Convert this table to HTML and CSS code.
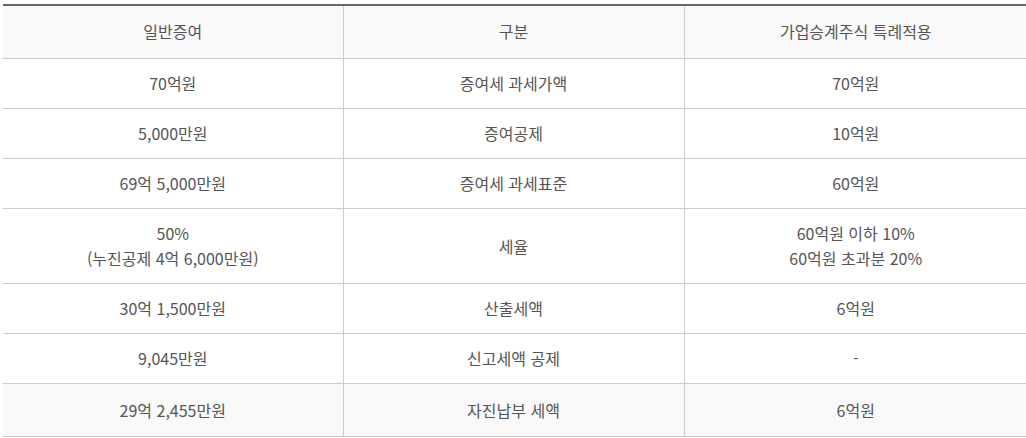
FILE: index.html
```html
<!DOCTYPE html>
<html lang="ko">
<head>
<meta charset="utf-8">
<link rel="stylesheet" href="styles.css">
</head>
<body>
<div class="wrap">
<table class="tbl">
  <colgroup><col class="c1"><col class="c2"><col class="c3"></colgroup>
  <thead>
    <tr class="head"><th>일반증여</th><th>구분</th><th>가업승계주식 특례적용</th></tr>
  </thead>
  <tbody>
    <tr><td>70억원</td><td>증여세 과세가액</td><td>70억원</td></tr>
    <tr><td>5,000만원</td><td>증여공제</td><td>10억원</td></tr>
    <tr><td>69억 5,000만원</td><td>증여세 과세표준</td><td>60억원</td></tr>
    <tr><td>50%<br>(누진공제 4억 6,000만원)</td><td>세율</td><td>60억원 이하 10%<br>60억원 초과분 20%</td></tr>
    <tr><td>30억 1,500만원</td><td>산출세액</td><td>6억원</td></tr>
    <tr><td>9,045만원</td><td>신고세액 공제</td><td>-</td></tr>
    <tr class="total"><td>29억 2,455만원</td><td>자진납부 세액</td><td>6억원</td></tr>
  </tbody>
</table>
</div>
</body>
</html>
```
FILE: styles.css
```css
html, body { margin: 0; padding: 0; background: #fff; }
.wrap { padding: 4px 0 0 3px; }
.tbl {
  width: 1024px;
  border-collapse: collapse;
  table-layout: fixed;
  border-top: 2px solid #666;
  font-family: "Noto Sans CJK KR", "Noto Sans", sans-serif;
  font-size: 16px;
  line-height: 25px;
  color: #555;
}
.c1 { width: 340px; }
.c2 { width: 341px; }
.c3 { width: 343px; }
.tbl th, .tbl td {
  border-bottom: 1px solid #ccc;
  border-left: 1px solid #ccc;
  text-align: center;
  vertical-align: middle;
  padding: 12px 4px;
  font-weight: 400;
}
.tbl th:first-child, .tbl td:first-child { border-left: none; }
.head th { background: #f9f9f9; height: 27px; padding: 12px 4px 13px; }
.total td { background: #f9f9f9; height: 27px; padding: 13px 4px 12px; }
```
